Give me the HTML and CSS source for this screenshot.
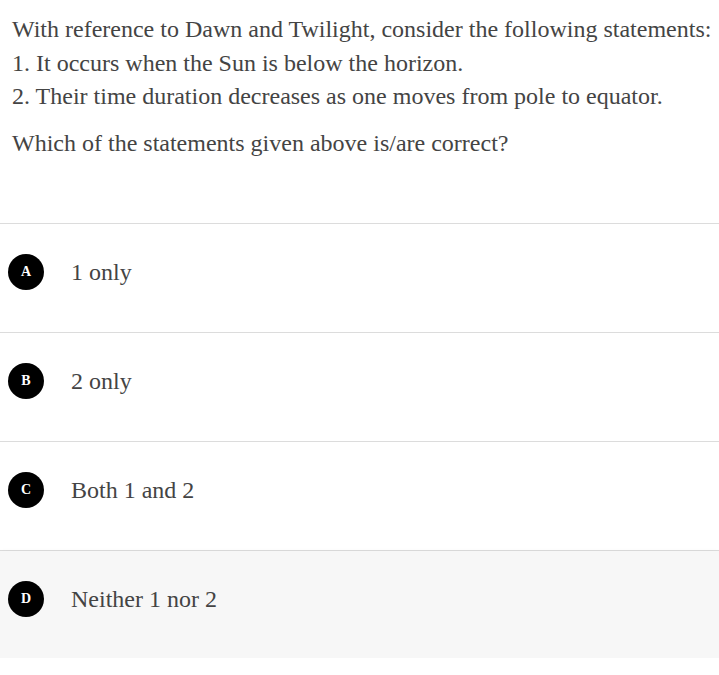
FILE: index.html
```html
<!DOCTYPE html>
<html>
<head>
<meta charset="utf-8">
<link rel="stylesheet" href="styles.css">
</head>
<body>
<div class="question">
  <div class="stem">
    <div class="line">With reference to Dawn and Twilight, consider the following statements:</div>
    <div class="line">1. It occurs when the Sun is below the horizon.</div>
    <div class="line">2. Their time duration decreases as one moves from pole to equator.</div>
  </div>
  <div class="ask">Which of the statements given above is/are correct?</div>
</div>
<div class="options">
  <div class="option"><span class="badge">A</span><span class="text">1 only</span></div>
  <div class="option"><span class="badge">B</span><span class="text">2 only</span></div>
  <div class="option"><span class="badge">C</span><span class="text">Both 1 and 2</span></div>
  <div class="option selected"><span class="badge">D</span><span class="text">Neither 1 nor 2</span></div>
</div>
</body>
</html>
```
FILE: styles.css
```css
html, body { margin: 0; padding: 0; background: #fff; }
body {
  font-family: "Liberation Serif", "Times New Roman", serif;
  color: #444;
  width: 719px;
  overflow: hidden;
}
.question {
  padding: 13px 4px 63px 12px;
  font-size: 24px;
  line-height: 33.5px;
}
.line { white-space: nowrap; }
.ask { margin-top: 13px; }
.options { border-top: 1px solid #dcdcdc; }
.option {
  display: flex;
  align-items: flex-start;
  height: 109px;
  box-sizing: border-box;
  padding: 30px 0 0 8px;
  border-bottom: 1px solid #dcdcdc;
}
.option.selected {
  background: #f7f7f7;
  box-shadow: 0 3px 6px rgba(0,0,0,0.12);
  border-bottom: none;
  height: 107px;
}
.badge {
  width: 36px;
  height: 36px;
  border-radius: 50%;
  background: #000;
  color: #fff;
  font-family: "Liberation Serif", "Times New Roman", serif;
  font-weight: bold;
  font-size: 14px;
  display: flex;
  align-items: center;
  justify-content: center;
  flex-shrink: 0;
}
.text {
  margin-left: 27px;
  font-size: 24px;
  line-height: 36px;
}
```
